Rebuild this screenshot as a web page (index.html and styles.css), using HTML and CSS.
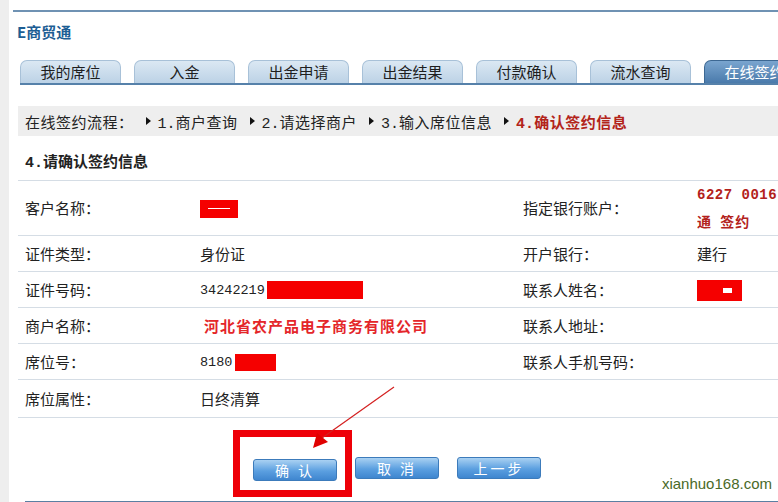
FILE: index.html
```html
<!DOCTYPE html>
<html lang="zh-CN">
<head>
    <meta charset="UTF-8">
    <title>E商贸通 - 在线签约</title>
    <link rel="stylesheet" href="styles.css">
</head>
<body>
<div class="page">
    <div class="strip"></div>
    <div class="main">
        <div class="header">
            <div class="site-title">E商贸通</div>
        </div>

        <div class="tabs">
            <div class="tab">我的席位</div>
            <div class="tab">入金</div>
            <div class="tab">出金申请</div>
            <div class="tab">出金结果</div>
            <div class="tab">付款确认</div>
            <div class="tab">流水查询</div>
            <div class="tab active">在线签约</div>
        </div>

        <div class="crumbs">
            <span>在线签约流程：</span>
            <span class="tri"></span><span><span class="n">1.</span>商户查询</span>
            <span class="tri"></span><span><span class="n">2.</span>请选择商户</span>
            <span class="tri"></span><span><span class="n">3.</span>输入席位信息</span>
            <span class="tri"></span><span class="now"><span class="n">4.</span>确认签约信息</span>
        </div>

        <div class="section-title"><span class="n">4.</span>请确认签约信息</div>

        <div class="info">
            <div class="row tall">
                <div>客户名称：</div>
                <div><span class="mask name-mask"><span class="dash"></span></span></div>
                <div>指定银行账户：</div>
                <div class="account">
                    <div>6227 0016</div>
                    <div class="cjk">通&nbsp; 签约</div>
                </div>
            </div>
            <div class="row">
                <div>证件类型：</div>
                <div>身份证</div>
                <div>开户银行：</div>
                <div>建行</div>
            </div>
            <div class="row">
                <div>证件号码：</div>
                <div><span class="num">34242219</span><span class="mask id-mask"></span></div>
                <div>联系人姓名：</div>
                <div><span class="mask contact-mask"><span class="dot"></span></span></div>
            </div>
            <div class="row">
                <div>商户名称：</div>
                <div class="merchant">河北省农产品电子商务有限公司</div>
                <div>联系人地址：</div>
                <div></div>
            </div>
            <div class="row">
                <div>席位号：</div>
                <div><span class="num">8180</span><span class="mask seat-mask"></span></div>
                <div>联系人手机号码：</div>
                <div></div>
            </div>
            <div class="row last">
                <div>席位属性：</div>
                <div>日终清算</div>
                <div></div>
                <div></div>
            </div>
        </div>

        <div class="actions">
            <span class="highlight"><button class="btn">确 认</button></span>
            <button class="btn plain cancel">取 消</button>
            <button class="btn plain back">上一步</button>
            <span class="watermark">xianhuo168.com</span>
        </div>
    </div>
</div>

<!-- annotation arrow pointing at the confirm button -->
<svg class="arrow" width="110" height="80" viewBox="0 0 110 80">
    <line x1="94" y1="6" x2="22" y2="57" stroke="#d42020" stroke-width="1.2"/>
    <polygon points="13,67 17,52 28,61" fill="#e00000"/>
</svg>
</body>
</html>
```

FILE: styles.css
```css
body {
    margin: 0;
    padding: 0;
    background-color: #fff;
    font-family: "Noto Sans CJK SC", "Noto Sans", sans-serif;
    color: #222;
    overflow: hidden;
}
.page {
    display: flex;
    height: 502px;
    width: 778px;
}
.strip {
    width: 9px;
    flex: none;
    background-color: #eeeeee;
}
.main {
    flex: 1;
    min-width: 0;
    margin-left: 4px;
    padding-top: 10px;
}
.header {
    border-top: 2px solid #6f92b3;
}
.site-title {
    margin: 10px 0 0 4px;
    line-height: 20px;
    font-size: 15px;
    font-weight: bold;
    color: #1d5e94;
}

/* tabs */
.tabs {
    display: flex;
    gap: 13px;
    margin: 18px 0 0 7px;
    border-bottom: 2px solid #5681aa;
    overflow: hidden;
}
.tab {
    flex: none;
    width: 101px;
    height: 23px;
    box-sizing: border-box;
    border: 1px solid #a8c1d8;
    border-bottom: none;
    border-radius: 7px 7px 0 0;
    background: linear-gradient(#dbe8f3, #bcd2e6);
    text-align: center;
    line-height: 22px;
    font-size: 15px;
    color: #1e1e1e;
}
.tab.active {
    background: linear-gradient(#7aa5cf, #4a7aab);
    border-color: #3d6893;
    color: #fff;
}

/* flow breadcrumb */
.crumbs {
    display: flex;
    align-items: center;
    height: 30px;
    margin: 21px 0 0 5px;
    padding-left: 7px;
    background-color: #eeeeee;
    font-size: 15px;
    letter-spacing: 0.5px;
    white-space: nowrap;
}
.n {
    font-family: "Liberation Mono", monospace;
    letter-spacing: 0;
    line-height: 1;
}
.tri {
    display: inline-block;
    width: 0;
    height: 0;
    border-left: 5px solid #111;
    border-top: 4px solid transparent;
    border-bottom: 4px solid transparent;
    margin: 0 7px 0 12px;
}
.crumbs .now {
    color: #b3241a;
    font-weight: bold;
}

.section-title {
    height: 20px;
    margin-left: 5px;
    padding: 15px 7px 9px;
    line-height: 20px;
    font-size: 15px;
    font-weight: bold;
    border-bottom: 1px solid #d5dde5;
}

/* info table */
.info {
    margin-left: 5px;
}
.row {
    display: grid;
    grid-template-columns: 175px 323px 174px 1fr;
    align-items: center;
    height: 35px;
    padding-left: 7px;
    border-bottom: 1px solid #d5dde5;
    font-size: 15px;
    line-height: 20px;
    white-space: nowrap;
}
.row > div {
    min-width: 0;
    overflow: hidden;
}
.row.tall {
    height: 54px;
}
.row.last {
    height: 37px;
}
.num {
    font-family: "Liberation Mono", monospace;
    font-size: 13.5px;
    vertical-align: middle;
}
.mask {
    display: inline-block;
    vertical-align: middle;
    background-color: #f50000;
    position: relative;
}
.name-mask {
    width: 42px;
    height: 18px;
    margin-left: -4px;
}
.dash {
    position: absolute;
    left: 12px;
    top: 8px;
    width: 22px;
    height: 1px;
    background-color: #fff;
}
.id-mask {
    width: 96px;
    height: 18px;
    margin-left: 2px;
}
.seat-mask {
    width: 41px;
    height: 17px;
    margin-left: 3px;
}
.contact-mask {
    width: 45px;
    height: 21px;
}
.dot {
    position: absolute;
    left: 26px;
    top: 8px;
    width: 9px;
    height: 5px;
    background-color: #fff;
}
.account {
    font-family: "Liberation Mono", monospace;
    font-weight: bold;
    font-size: 14px;
    color: #b3221c;
    line-height: 26px;
    letter-spacing: 0.5px;
}
.account .cjk {
    font-family: "Noto Sans CJK SC", sans-serif;
    letter-spacing: 1px;
}
.merchant {
    padding-left: 4px;
    color: #e4262a;
    font-weight: bold;
    letter-spacing: 1px;
}

/* buttons */
.actions {
    display: flex;
    align-items: flex-start;
    margin-left: 12px;
    padding: 12px 0 4px 208px;
    border-bottom: 2px solid #5b7fa2;
}
.highlight {
    display: inline-block;
    border: 7px solid #ee0008;
    padding: 20px 8px 9px 13px;
}
.btn {
    width: 84px;
    height: 22px;
    padding: 0;
    border: 1px solid #3c7bbb;
    border-radius: 3px;
    background: linear-gradient(#a9d1f2, #5b9fe0 55%, #3f86cf);
    color: #fff;
    font-family: "Noto Sans CJK SC", sans-serif;
    font-size: 14px;
    line-height: 20px;
    letter-spacing: 3px;
    cursor: pointer;
}
.btn.plain {
    margin-top: 27px;
}
.btn.cancel {
    margin-left: 3px;
}
.btn.back {
    margin-left: 18px;
}
.watermark {
    align-self: flex-end;
    margin: 0 6px 5px auto;
    font-family: "Liberation Sans", Arial, sans-serif;
    font-size: 15px;
    color: #4a6a28;
}

.arrow {
    position: absolute;
    left: 300px;
    top: 381px;
}
```
